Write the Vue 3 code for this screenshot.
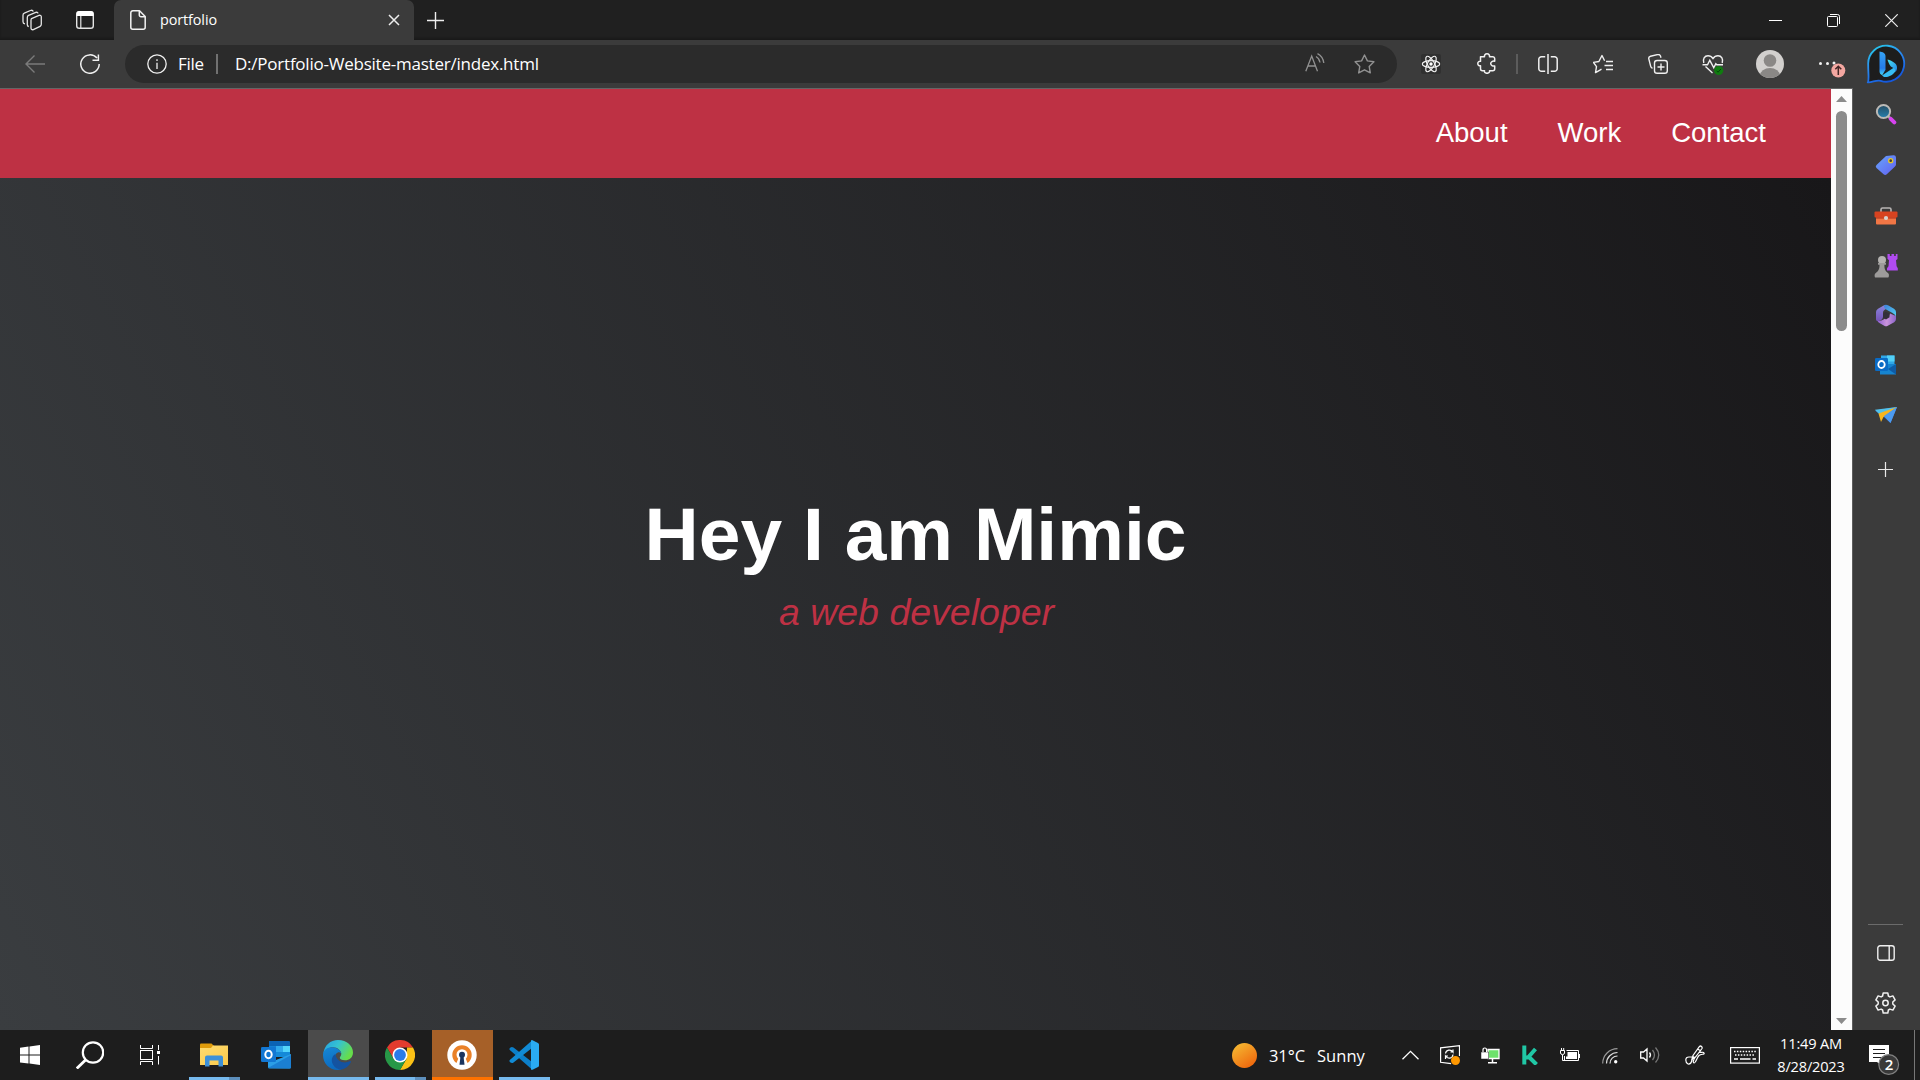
<script setup>
const links = ['About', 'Work', 'Contact']
</script>

<template>
  <div class="screen">
    <header class="titlebar">
      <div class="slot workspaces">
        <svg width="22" height="22" viewBox="0 0 22 22" fill="none" stroke="#e4e4e4" stroke-width="1.3" stroke-linejoin="round">
          <path d="M10.500 9.600l7.500-3.200c1.200-.4 2.300.2 2.300 1.400v7.500c0 1-.4 1.600-1.200 2l-6.800 3.300c-1.200.5-2.300-.2-2.300-1.500v-7.600c0-1 0-1.500.5-1.900z" />
          <path d="M7.800 17.500c-1-.2-1.500-.800-1.500-1.800V8.500c0-1 .5-1.700 1.300-2.100l7.200-3c1.200-.4 2 .1 2.300 1" />
          <path d="M4 14.800c-1.200-.1-2-.8-2-2V6.200c0-1 .5-1.700 1.300-2L9.500 1.500c1.300-.5 2.300-.1 2.800 1" />
        </svg>
      </div>
      <div class="slot tab-actions">
        <svg width="20" height="20" viewBox="0 0 20 20" fill="none">
          <rect x="1.700" y="1.700" width="16.600" height="16.600" rx="2.600" stroke="#e4e4e4" stroke-width="1.400" />
          <path d="M1.500 6V4a3 3 0 0 1 3-3h11a3 3 0 0 1 3 3v2z" fill="#fff" />
          <path d="M5.800 6v12" stroke="#e4e4e4" stroke-width="1.200" />
        </svg>
      </div>
      <div class="tab">
        <svg width="16" height="20" viewBox="0 0 16 20" fill="none" stroke="#f2f2f2" stroke-width="1.500" stroke-linejoin="round">
          <path d="M2.800.8h6.700l5.700 5.700v10.700a2 2 0 0 1-2 2H2.800a2 2 0 0 1-2-2V2.800a2 2 0 0 1 2-2z" />
          <path d="M9.300 1v4a1.700 1.700 0 0 0 1.700 1.700h4" />
        </svg>
        <span class="tab-title">portfolio</span>
        <svg class="tab-close" width="12" height="12" viewBox="0 0 12 12" stroke="#eee" stroke-width="1.500"><path d="M1 1l10 10M11 1L1 11" /></svg>
      </div>
      <svg class="new-tab" width="17" height="17" viewBox="0 0 17 17" stroke="#eee" stroke-width="1.400"><path d="M0 8.500h17M8.500 0v17" /></svg>
      <div class="controls">
        <svg width="13" height="13" viewBox="0 0 13 13" stroke="#fff"><path d="M0 6.500h13" /></svg>
        <svg width="13" height="13" viewBox="0 0 13 13" fill="none" stroke="#fff"><rect x=".5" y="2.500" width="10" height="10" rx="1" /><path d="M3 .5h7.500a2 2 0 0 1 2 2V10" /></svg>
        <svg width="13" height="13" viewBox="0 0 13 13" stroke="#eee" stroke-width="1.200"><path d="M.3.3l12.400 12.400M12.700.3L.3 12.700" /></svg>
      </div>
    </header>

    <div class="middle">
      <div class="browser">
        <div class="toolbar">
          <div class="slot nav-btn">
            <svg width="20" height="18" viewBox="0 0 20 18" fill="none" stroke="#7b7b7b" stroke-width="1.400"><path d="M20 9H1M9.500.6L1 9l8.500 8.400" /></svg>
          </div>
          <div class="slot nav-btn">
            <svg width="20" height="20" viewBox="0 0 20 20" fill="none" stroke="#f0f0f0" stroke-width="1.500"><path d="M19.200 10A9.200 9.200 0 1 1 17 4.100M18.400.5v5.800h-5.900" /></svg>
          </div>
          <div class="address">
            <svg width="20" height="20" viewBox="0 0 20 20" fill="none" stroke="#f0f0f0" stroke-width="1.300"><circle cx="10" cy="10" r="9.200" /><path d="M10 8.700V15M10 5.300V7" /></svg>
            <span class="scheme">File</span>
            <i class="bar"></i>
            <span class="url">D:/Portfolio-Website-master/index.html</span>
            <svg class="aloud" width="20" height="19" viewBox="0 0 20 19" fill="none" stroke="#919191" stroke-width="1.300"><path d="M.8 18.300L6.700 3l5.800 15.300M2.700 13h8M11 3.500c2.200 1.200 3.600 3.400 4 6M12.500.6c3.500 1.800 5.800 5.200 6.300 9.400" /></svg>
            <svg width="21" height="20" viewBox="0 0 21 20" fill="none" stroke="#919191" stroke-width="1.400" stroke-linejoin="round"><path d="M10.500 1l2.900 5.900 6.500.9-4.700 4.600 1.100 6.500-5.800-3.100-5.800 3.100 1.100-6.500L1.100 7.800l6.500-.9z" /></svg>
          </div>
          <div class="tools">
            <div class="slot">
              <svg class="react" width="20" height="20" viewBox="0 0 20 20" fill="none" stroke="#f1f1f1" stroke-width="1.200">
                <ellipse cx="10" cy="10" rx="8.700" ry="3.400" /><ellipse cx="10" cy="10" rx="8.700" ry="3.400" transform="rotate(60 10 10)" /><ellipse cx="10" cy="10" rx="8.700" ry="3.400" transform="rotate(120 10 10)" /><circle cx="10" cy="10" r="1.700" fill="#fff" stroke="none" />
              </svg>
            </div>
            <div class="slot puzzle">
              <svg width="19" height="21" viewBox="0 0 19 21" fill="none" stroke="#f0f0f0" stroke-width="1.500" stroke-linejoin="round"><path d="M3.500 3.700h4c-.3-1.500.6-2.900 2.500-2.900s2.800 1.400 2.500 2.900h3.200a2 2 0 0 1 2 2v2.500c-2-.4-4 .5-4 2.400s2 2.800 4 2.400v2.700a2 2 0 0 1-2 2h-3.200c.3 1.500-.6 2.600-2.500 2.600s-2.800-1.100-2.500-2.600h-2a2 2 0 0 1-2-2v-2.900c-1.500.2-2.700-.5-2.700-2.200s1.200-2.500 2.700-2.300z" /></svg>
            </div>
            <i class="bar tool-bar"></i>
            <div class="slot">
              <svg width="20" height="20" viewBox="0 0 20 20" fill="none" stroke="#f0f0f0" stroke-width="1.500"><path d="M7.200 2.700H3.500A2.600 2.600 0 0 0 .8 5.300v9.400a2.600 2.600 0 0 0 2.700 2.600h3.700M12.800 2.700h3.700a2.600 2.600 0 0 1 2.700 2.600v9.400a2.600 2.600 0 0 1-2.700 2.600h-3.700M10 0v20" /></svg>
            </div>
            <div class="slot">
              <svg width="20" height="20" viewBox="0 0 20 20" fill="none" stroke="#f0f0f0" stroke-width="1.400" stroke-linejoin="round"><path d="M6.500 16.300l-4 2.300 1-6-3-4.200 5.400-.9L9 1.500l2.600 5.300M13 7.500h7M11.500 11.500H20M13 15.500h7M6.500 16.300l2-1.100" /></svg>
            </div>
            <div class="slot">
              <svg width="20" height="20" viewBox="0 0 20 20" fill="none" stroke="#f0f0f0" stroke-width="1.400"><rect x="6.500" y="6.500" width="12.800" height="12.800" rx="2.600" /><path d="M13 9.500v7M9.500 13h7M4.500 14.200c-1-.2-1.600-.9-1.800-1.800L.8 4.800C.5 3.300 1.200 2.500 2.500 2.200l7-1.600c1.500-.3 2.500.2 3 1.500l.5 1.700" /></svg>
            </div>
            <div class="slot">
              <svg class="heart" width="22" height="22" viewBox="0 0 22 22" fill="none" stroke="#f0f0f0" stroke-width="1.400"><path d="M1.800 9C.5 5 2.500 1.700 6 1.700c2 0 3.800 1 5 2.800 1.200-1.800 3-2.800 5-2.800 3.500 0 5.500 3.300 4.200 7.300M3.500 12.500L10.500 19M.5 10.800h5l2.300-4.500 4 7.500 2-4 1 1H21" /><circle cx="16.700" cy="16.500" r="4.600" fill="#107c10" stroke="none" /><path d="M14.500 16.700l1.500 1.500 3-3.300" stroke="#06420a" stroke-width="1" /></svg>
            </div>
            <div class="slot avatar">
              <svg width="28" height="28" viewBox="0 0 28 28"><defs><clipPath id="av"><circle cx="14" cy="14" r="14" /></clipPath></defs><g clip-path="url(#av)"><path fill="#d2d0ce" d="M0 0h28v28H0z" /><circle cx="14" cy="10.500" r="6.300" fill="#8a8886" /><ellipse cx="14" cy="25.500" rx="10" ry="7.500" fill="#8a8886" /></g></svg>
            </div>
            <div class="slot more">
              <svg width="28" height="28" viewBox="0 0 28 28"><g fill="#f2f2f2"><circle cx="2.500" cy="13.500" r="1.500" /><circle cx="9.500" cy="13.500" r="1.500" /><circle cx="16" cy="13" r="1.500" /></g><circle cx="20.300" cy="20.500" r="7" fill="#f4a7a1" /><path d="M20.300 25v-8.500M17.300 19.200l3-3 3 3" fill="none" stroke="#442726" stroke-width="1.500" /></svg>
            </div>
          </div>
        </div>
        <div class="viewport">
          <main class="page">
            <nav><a v-for="l in links" :key="l">{{ l }}</a></nav>
            <section class="welcome">
              <h1>Hey I am Mimic</h1>
              <p>a web developer</p>
            </section>
          </main>
          <div class="scroll">
            <svg width="11" height="6" viewBox="0 0 11 6"><path d="M0 6L5.500 0 11 6z" fill="#8b8b8b" /></svg>
            <div class="thumb"></div>
            <svg class="down" width="11" height="6" viewBox="0 0 11 6"><path d="M0 0l5.500 6L11 0z" fill="#8b8b8b" /></svg>
          </div>
        </div>
      </div>

      <aside>
        <div class="bing">
          <svg width="40" height="40" viewBox="0 0 40 40">
            <defs>
              <linearGradient id="bo" x1="0" y1="0" x2=".5" y2="1"><stop stop-color="#25d3ea" /><stop offset=".5" stop-color="#2b8df0" /><stop offset="1" stop-color="#1558dd" /></linearGradient>
              <linearGradient id="bb" x1="0" y1="0" x2="0" y2="1"><stop stop-color="#35a4f5" /><stop offset=".7" stop-color="#257bea" /><stop offset="1" stop-color="#43d8f6" /></linearGradient>
              <linearGradient id="bc" x1="0" y1="0" x2="1" y2="1"><stop stop-color="#49e2ee" /><stop offset="1" stop-color="#2285e9" /></linearGradient>
            </defs>
            <path d="M2 38.300C3.200 35 2.200 30 2.200 20a18 18 0 1 1 12.500 16.800C10.500 35.500 6 38.700 2 38.300z" fill="#1d1d1d" stroke="url(#bo)" stroke-width="1.800" />
            <path d="M13.500 7.500c3 .5 6 1.500 6 4.500v13.700l-3.300 5.500c-1.700-.8-2.700-2-2.700-4z" fill="url(#bb)" />
            <path d="M16 31.500l12-8c2-1.300 2.500.3 2 2.300-1.200 4.400-7.500 8-12 7.200z" fill="#36bdf1" />
            <path d="M21.500 15.500c5 1.500 10 4 9.500 8.500 0 1.500-.7 3-1.500 4 .4-2.500-1.500-3.800-3.500-4.700-1.700-.8-3.800-4.800-4.500-7.800z" fill="url(#bc)" />
          </svg>
        </div>
        <div class="app search">
          <svg width="22" height="22" viewBox="0 0 22 22"><defs><linearGradient id="lens" x2="0" y2="1"><stop stop-color="#264c62" /><stop offset="1" stop-color="#2680af" /></linearGradient></defs><path d="M13 13l3 3" stroke="#aaa" stroke-width="2.500" /><circle cx="8.500" cy="8.500" r="6.600" fill="url(#lens)" stroke="#bcbab7" stroke-width="2" /><path d="M15.800 15.800l3.500 3.500" stroke="#d743ef" stroke-width="4" stroke-linecap="round" /></svg>
        </div>
        <div class="app">
          <svg width="22" height="22" viewBox="0 0 22 22"><defs><linearGradient id="tg" x1="0" y1="0" x2="1" y2="1"><stop stop-color="#67a6fb" /><stop offset="1" stop-color="#625ff1" /></linearGradient></defs><path d="M11 2L18.500 1.200Q20.800 1 21 3.500v7q0 1-1 2L11.800 20.300q-1.600 1.400-3.200 0L1.500 14q-1.500-1.600 0-3z" fill="url(#tg)" /><circle cx="15.700" cy="6.700" r="2" fill="#403d39" stroke="#e7c828" stroke-width="1.300" /></svg>
        </div>
        <div class="app toolbox">
          <svg width="24" height="20" viewBox="0 0 24 20"><path d="M7 6V3.500Q7 2 8.500 2h7Q17 2 17 3.500V6" fill="none" stroke="#b8b5b4" stroke-width="1.600" /><path d="M2 11h20v6.500q0 1-1 1H3q-1 0-1-1z" fill="#f17645" /><rect x=".5" y="5.500" width="23" height="6" rx="1" fill="#d84320" /><path d="M2 12h20" stroke="#b12d17" /><circle cx="12" cy="12" r="2.100" fill="#d9d4d0" /></svg>
        </div>
        <div class="app">
          <svg width="24" height="25" viewBox="0 0 24 25"><path d="M13.500 1h2.300v2h1.700V1h2.600v2h1.700V1h1.700v5l-1.500 1.300.6 6 1.200 2v2.200H13v-2.200l1.500-2 .5-6-1.500-1.500z" fill="#b04bf0" /><circle cx="8" cy="7" r="4" fill="#b3b1af" /><path d="M4 10h8v1.800h-1.600c0 4 .5 6 3.800 8.400 1.200.9.800 4.300-.2 4.300H1.500c-1 0-1.300-3.400 0-4.300 3.400-2.400 4-4.400 4-8.400H4z" fill="#9d9b9a" /></svg>
        </div>
        <div class="app">
          <svg width="22" height="23" viewBox="0 0 22 23"><defs><linearGradient id="m1" x2="0" y2="1"><stop stop-color="#8a86dd" /><stop offset="1" stop-color="#7553b8" /></linearGradient><linearGradient id="m2" x2="1" y2="1"><stop stop-color="#3f7fd9" /><stop offset="1" stop-color="#52d3f2" /></linearGradient><linearGradient id="m3" x2="1" y2="0"><stop stop-color="#8d5fd0" /><stop offset=".5" stop-color="#cb94dc" /><stop offset="1" stop-color="#8a63c9" /></linearGradient></defs>
            <path d="M9.500 1L3 4.700Q1 6 1 8v7.500q0 1.500 2 1.500 4.500-.5 5-4V8.500Q8 6 12.500 4.500z" fill="url(#m1)" /><path d="M9.500 1q1.700-.8 3.500.2L19 4.700q2 1.200 2 3.300v5q-.5-2.500-3.500-4L12 6Q9 4.500 9 2.500z" fill="url(#m2)" /><path d="M21 12v3q0 2-1.800 3.200l-6.400 3.600q-1.800 1-3.600 0L4 18.700q-1.500-1-1.500-2.200 3 .8 6-1L14 12l1-2.500z" fill="url(#m3)" /><path d="M10.500 7.800l4 1.700v3.800l-3.500 2.200-3-2v-3.700z" fill="#33303a" /></svg>
        </div>
        <div class="app">
          <svg width="22" height="22" viewBox="0 0 22 22"><path d="M6 1.500h13.500v10H6z" fill="#30a8e8" /><path d="M12 1.500h7.500v6H12z" fill="#52d0f7" /><path d="M5 10h16v10.500H5z" fill="#1684d0" /><path d="M21 10v10.500L13 15z" fill="#0f5ba5" /><rect y="4" width="13" height="13" rx="1.300" fill="#0a6bc5" /><ellipse cx="6.500" cy="10.500" rx="3.200" ry="3.500" fill="none" stroke="#fff" stroke-width="1.800" /></svg>
        </div>
        <div class="app">
          <svg width="22" height="18" viewBox="0 0 22 18"><path d="M0 4.500L22 1 15.500 17 9 11z" fill="#397ee9" /><path d="M0 3.800L22 1 5 9z" fill="#51c1ea" /><path d="M3.500 7.500L22 1 8.500 11 6 16z" fill="#f7b51f" /><path d="M22 1L9 10l6.500 7z" fill="#4c9bf0" /></svg>
        </div>
        <div class="app add"><svg width="15" height="15" viewBox="0 0 15 15" stroke="#e8e8e8" stroke-width="1.200"><path d="M0 7.500h15M7.500 0v15" /></svg></div>
        <div class="side-end">
          <svg width="18" height="16" viewBox="0 0 18 16" fill="none" stroke="#f0f0f0" stroke-width="1.400"><rect x=".8" y=".8" width="16.400" height="14.400" rx="2.300" /><path d="M12.200 1v14" /></svg>
        </div>
        <div class="app">
          <svg width="21" height="22" viewBox="0 0 21 22" fill="none" stroke="#f0f0f0" stroke-width="1.500" stroke-linejoin="round"><circle cx="10.500" cy="11" r="2.700" /><path d="M8.200 1h4.600l.6 3 1.500.9 3-1 2.200 4-2.300 2.100v2l2.300 2.100-2.200 4-3-1-1.500.9-.6 3H8.200l-.6-3-1.500-.9-3 1-2.200-4L3.200 12v-2L.9 7.900l2.200-4 3 1L7.600 4z" /></svg>
        </div>
      </aside>
    </div>

    <footer>
      <div class="system">
        <div><svg width="20" height="20" viewBox="0 0 20 20" fill="#fff"><path d="M0 2.700L8.500 1.500v8H0zM9.500 1.400L20 0v9.500H9.500zM0 10.500h8.500v8L0 17.400zM9.500 10.500H20V20L9.500 18.600z" /></svg></div>
        <div><svg width="28" height="28" viewBox="0 0 28 28" fill="none" stroke="#fff" stroke-width="2.200"><circle cx="17" cy="11.500" r="10.200" /><path d="M9.800 18.700L.8 27.500" stroke-width="2.800" /></svg></div>
        <div><svg width="20" height="20" viewBox="0 0 20 20" fill="none" stroke="#fff"><path d="M.5 0v3.500h12V0M.5 20v-3.500h12V20" /><rect x=".5" y="5.500" width="12" height="9" /><path d="M18.500 0v5M18.500 11v8.500" /><path d="M17 6h3v3h-3z" fill="#fff" stroke="none" /></svg></div>
      </div>
      <div class="apps">
        <div class="task multi">
          <svg width="28" height="24" viewBox="0 0 28 24"><defs><linearGradient id="fg" x2="1" y2="1"><stop stop-color="#ffdc70" /><stop offset="1" stop-color="#f9c94b" /></linearGradient></defs><path d="M0 1.500Q0 .5 1 .5h10.500L14 3l-2 3H0z" fill="#e09c0b" /><path d="M0 5h11l2-2.500h15V22H0z" fill="url(#fg)" /><path d="M5 23.500v-9q0-2 2-2h14q2 0 2 2v9h-4.500v-6h-9v6z" fill="#3c90d8" /></svg>
        </div>
        <div class="task idle">
          <svg width="30" height="28" viewBox="0 0 30 28"><path d="M8 0h20q1 0 1 1v14H8z" fill="#0b63b5" /><path d="M8 5h7v13H8z" fill="#1482d4" /><path d="M15 5h7v6h-7z" fill="#31a9ec" /><path d="M22 5h7v6h-7z" fill="#53d5fb" /><path d="M15 11h14v5H15z" fill="#1489d8" /><path d="M7 17l8 2 15-6v13q0 1.500-1.500 1.500h-20Q7 27.500 7 26z" fill="#2b9ee6" /><path d="M7 27l23-13v12q0 1.500-1.500 1.500z" fill="#1b7fd2" /><rect y="6" width="15" height="15" rx="1.300" fill="#1277d3" /><ellipse cx="7.500" cy="13.500" rx="3.200" ry="3.700" fill="none" stroke="#fff" stroke-width="2" /></svg>
        </div>
        <div class="task active">
          <svg width="30" height="30" viewBox="0 0 30 30">
            <defs>
              <linearGradient id="e1" x1="0" y1="0" x2="1" y2=".45"><stop stop-color="#229fe5" /><stop offset=".5" stop-color="#36c3d0" /><stop offset="1" stop-color="#66dd4b" /></linearGradient>
              <linearGradient id="e2" x1=".2" y1="0" x2=".5" y2="1"><stop stop-color="#1586d5" /><stop offset="1" stop-color="#0b68bd" /></linearGradient>
            </defs>
            <path d="M.4 13.500C1.300 5.300 7.500 0 15 0c9 0 15 6 15 12.500 0 5-3.800 7.800-8 7.800-3.300 0-5.200-1.200-5.200-2.500 0-.9 1.500-1.500 1.500-4 0-3-3.500-6.500-8.500-6.500-4.300 0-7.600 2.300-9.400 6.200z" fill="url(#e1)" />
            <path d="M0 15C0 10 4.500 7.300 9 7.300c5 0 9 3.200 9.300 6.400-1-1.200-2.300-1.600-3.500-1.300-2 .5-2.600 3-2.600 5 0 6 5.500 9.500 11 8.400C20.500 28.500 18 30 14.500 30 6 30 0 23 0 15z" fill="url(#e2)" />
            <path d="M12.500 14C9 16 8 20 9.500 23.500c1.500 3.800 5 6 8.500 6 4.200-.5 8-3.300 9.800-7.200.4-.9-.3-1.500-1.200-1-5.300 3-13.600 0-14.100-7.300z" fill="#1453a0" />
          </svg>
        </div>
        <div class="task multi">
          <svg width="30" height="30" viewBox="0 0 30 30"><path d="M2 7.500A15 15 0 0 1 28 7.500H15L8.500 18.800z" fill="#e33b2e" /><path d="M28 7.500A15 15 0 0 1 15 30l6.500-11.200L22 7.500z" fill="#fbc116" /><path d="M2 7.500A15 15 0 0 0 15 30l6.500-11.200-13 0z" fill="#279847" /><circle cx="15" cy="15" r="7.500" fill="#fff" /><circle cx="15" cy="15" r="5.900" fill="#2a7bea" /></svg>
        </div>
        <div class="task vpn">
          <svg width="30" height="30" viewBox="0 0 30 30"><circle cx="15" cy="15" r="14.700" fill="#fff" /><path d="M9.500 23a9.700 9.700 0 1 1 11 0l-1.700-4.300a5.500 5.500 0 1 0-7.600 0z" fill="#ea8128" /><circle cx="15" cy="14.700" r="3" fill="#1b345e" /><path d="M13.500 16h3l1 8.800h-5z" fill="#1b345e" /></svg>
        </div>
        <div class="task code">
          <svg width="30" height="30" viewBox="0 0 30 30"><path d="M1.500 7.500Q3 6.500 4.500 7.600L23 22v7.500L.8 10q-1-1.500.7-2.500z" fill="#0c7fc9" /><path d="M1.500 22.500q1.500 1 3-.1L23 8V.5L.8 20q-1 1.500.7 2.500z" fill="#118bd5" /><path d="M22 .5q1-.8 2 0L29 3q1 .5 1 1.500v21q0 1-1 1.500l-5 2.500q-1 .7-2 0z" fill="#2aabf2" /></svg>
        </div>
      </div>
      <div class="weather">
        <svg width="25" height="25" viewBox="0 0 25 25"><defs><linearGradient id="sun" x1=".1" y1="0" x2=".8" y2="1"><stop stop-color="#f5bd34" /><stop offset="1" stop-color="#ef630b" /></linearGradient></defs><circle cx="12.500" cy="12.500" r="12.500" fill="url(#sun)" /></svg>
        <span class="deg">31°C</span><span class="sky">Sunny</span>
      </div>
      <div class="tray">
        <div><svg width="17" height="10" viewBox="0 0 17 10" fill="none" stroke="#fff" stroke-width="1.300"><path d="M.5 9.300l8-8 8 8" /></svg></div>
        <div><svg width="20" height="20" viewBox="0 0 20 20" fill="none" stroke="#fff" stroke-width="1.200"><path d="M19.500 11V.7L.6 2.800v14.500l10.500 1.400" /><path d="M5.500 8.500c.5-4 5.500-4.500 7.500-1.500V4.500M13 7h-2.500M13 9.500c-.5 4-5 5-7.500 1.500v3M5.500 11H8" /><circle cx="15.500" cy="15.500" r="4.500" fill="#ff9800" stroke="none" /></svg></div>
        <div><svg width="19" height="18" viewBox="0 0 19 18" fill="none"><path d="M7 3.500h11v9H7z" fill="#6de26b" stroke="#fff" stroke-width="1.300" /><path d="M11.500 13v3.500M7 16.800h9" stroke="#fff" stroke-width="1.500" /><path d="M0 6h7.500v7H0z" fill="#fff" stroke="#1d1d1d" stroke-width=".5" /><path d="M2 6V4q0-2 1.800-2t1.800 2v2" stroke="#fff" stroke-width="1.200" /></svg></div>
        <div><svg width="17" height="20" viewBox="0 0 17 20" fill="none" stroke="#20c7a5" stroke-width="4"><path d="M2.300.5v19M3 12.500h3L13.500 4M6.500 11.500l8 8" /></svg></div>
        <div><svg width="20" height="14" viewBox="0 0 20 14" fill="none" stroke="#fff"><path d="M6.500 2.500h12v10h-14V8" /><path d="M7.500 4h9.500v7H6V8.500h1.500z" fill="#fff" stroke="none" /><path d="M19.500 6v4" /><path d="M.5 2.500h4V5Q4.500 6.500 2.500 6.500T.5 5zM1.500 0v2.500M3.700 0v2.500M2.500 7v5.500H5" /></svg></div>
        <div><svg class="wifi" width="16" height="16" viewBox="0 0 16 16" fill="none" stroke="#ddd" stroke-width="1.200"><path d="M.7 15.500A14.800 14.800 0 0 1 15.500.7" stroke="#999" /><path d="M4.500 15.500a11 11 0 0 1 11-11M8 15.500A7.500 7.500 0 0 1 15.500 8" /><circle cx="13.700" cy="13.700" r="1.700" fill="#fff" stroke="none" /></svg></div>
        <div><svg width="20" height="18" viewBox="0 0 20 18" fill="none" stroke="#fff" stroke-width="1.300"><path d="M.7 6h2.800l3.500-3v12l-3.500-3H.7zM9.500 6.500q2 2.500 0 5" /><path d="M12.500 4q4 5 0 10M15.500 1.500q6.500 7.500 0 15" stroke="#777" /></svg></div>
        <div class="wide"><svg width="20" height="20" viewBox="0 0 20 20" fill="none" stroke="#fff" stroke-width="1.200"><path d="M7 14l1-3.500 6.500-9q1-1 2 0t.5 2L10.500 12zM12.500 4l3.500 2M7.500 12H4q-3.200 0-3.200 3T3 19q3 .5 4-4l2-3.500M10.500 12c-2 2.500-3 5.500-1.500 6s3-5.500 5-7.500 6-.5 5-2.500-2.500.5-5-1" /></svg></div>
        <div class="wide"><svg width="30" height="18" viewBox="0 0 30 18" fill="none" stroke="#fff"><rect x=".6" y="1.600" width="28.800" height="15.500" stroke-width="1.200" /><path d="M4 5.500h22" stroke-width="1.300" stroke-dasharray="1.500 1.400" /><path d="M5 9h20" stroke-width="1.300" stroke-dasharray="1.500 1.400" /><path d="M4 13h4M10 13h10.500M22.500 13h3.500" stroke-width="1.300" /></svg></div>
      </div>
      <div class="clock"><span>11:49 AM</span><span>8/28/2023</span></div>
      <div class="action">
        <svg width="31" height="32" viewBox="0 0 31 32"><path d="M0 1h20v17h-7v4l-5-4H0z" fill="#fff" /><path d="M4 5.500h12M4 9.500h12M4 13.500h12" stroke="#1d1d1d" stroke-width="1.200" /><circle cx="19.700" cy="20.500" r="9.900" fill="#393939" stroke="#818181" stroke-width="1.200" /></svg>
        <b>2</b>
      </div>
      <i class="peek"></i>
    </footer>
  </div>
</template>

<style>
body { overflow: hidden; background: #1d1d1d; }
</style>

<style scoped>
* { box-sizing: border-box; }
svg { display: block; flex: none; }
.screen { width: 1920px; height: 1080px; display: flex; flex-direction: column; overflow: hidden; font-family: "Open Sans", "Noto Sans", sans-serif; color: #fff; }
.slot { display: flex; align-items: center; justify-content: center; flex: none; }
.titlebar { height: 40px; background: #202020; display: flex; align-items: center; box-shadow: inset 0 -2px 2px #1a1a1a; flex: none; }
.workspaces { width: 64px; }
.tab-actions { width: 42px; }
.tab { margin-left: 8px; width: 300px; height: 40px; padding: 0 14px 0 16px; background: #3b3b3b; border-radius: 7px 7px 0 0; display: flex; align-items: center; }
.tab-title { font-size: 14.400px; margin-left: 14px; letter-spacing: -.1px; line-height: 20px; }
.tab-close { margin-left: auto; }
.new-tab { margin-left: 13px; }
.controls { margin-left: auto; display: flex; gap: 45px; padding-right: 22px; }

.middle { height: 990px; display: flex; }
.browser { width: 1853px; display: flex; flex-direction: column; background: #3b3b3b; }
.toolbar { height: 48px; display: flex; align-items: center; padding-left: 7px; flex: none; }
.nav-btn { width: 55px; }
.address { width: 1272px; height: 38px; margin-left: 8px; border-radius: 19px; background: #2b2b2b; display: flex; align-items: center; padding: 0 22px 0 22px; font-size: 17px; line-height: 24px; flex: none; }
.scheme { margin-left: 11px; width: 38px; letter-spacing: -.3px; }
.bar { width: 2px; height: 20px; background: #717171; display: block; }
.url { margin-left: 17px; letter-spacing: -.23px; white-space: nowrap; }
.aloud { margin-left: auto; margin-right: 29px; margin-top: -4px; }
.tools { display: flex; align-items: center; margin-left: 6px; margin-top: -1px; }
.tools .slot { width: 55px; }
.tools .puzzle { width: 56px; }
.tool-bar { margin: 0 2px; background: #5c5c5c; }
.react { background: #303030; border-radius: 2px; }
.tools .avatar { width: 59px; }
.tools .more { width: 56px; padding-left: 9px; margin-top: 1px; }
.heart { margin-top: 2px; }

.viewport { flex: 1; display: flex; border-top: 1px solid #656565; border-right: 1px solid #5d5d5d; }
.page { width: 1831px; display: flex; flex-direction: column; font-family: "Liberation Sans", Arial, sans-serif; }
nav { height: 89px; flex: none; background: #be3144; display: flex; justify-content: flex-end; align-items: center; gap: 50px; padding: 0 65px 2px 0; font-size: 27.500px; }
.welcome { flex: 1; display: flex; flex-direction: column; align-items: center; justify-content: center; gap: 14px; padding-bottom: 83px; background: linear-gradient(62.500deg, #3a3d40 0%, #181719 100%); }
h1 { margin: 0; font-size: 75px; line-height: 86px; font-weight: 700; }
.welcome p { margin: 0; padding-left: 2px; font-size: 37.500px; line-height: 43px; font-style: italic; font-weight: 200; color: #be3144; }
.scroll { width: 21px; background: #fcfcfc; display: flex; flex-direction: column; align-items: center; padding: 7px 0 6px; }
.thumb { width: 11px; height: 220px; margin-top: 9px; border-radius: 6px; background: #8b8b8b; }
.down { margin-top: auto; }

aside { width: 67px; padding-right: 2px; background: #3b3b3b; display: flex; flex-direction: column; align-items: center; }
.bing { height: 50px; padding: 4px 0 0 1px; }
.app { height: 50px; display: flex; align-items: center; flex: none; }
.search { padding-bottom: 2px; }
.toolbox { padding-top: 1px; }
.add { height: 59px; }
.side-end { margin-top: auto; width: 35px; height: 54px; border-top: 1px solid #6b6b6b; display: flex; justify-content: center; padding-top: 20px; }
aside .app:last-child { margin-bottom: 2px; }

footer { height: 50px; background: #1d1d1d; display: flex; align-items: stretch; flex: none; }
.system, .tray, .apps { display: flex; }
.system div { width: 60px; display: flex; align-items: center; justify-content: center; }
.apps { margin-left: 4px; gap: 1px; width: 371px; }
.task { width: 61px; flex: none; display: flex; align-items: center; justify-content: center; padding-right: 1px; background: linear-gradient(#76b9ed, #76b9ed) 50% 100% / 51px 3px no-repeat; }
.task.multi { background: linear-gradient(90deg, #76b9ed 40px, #5d8fbc 40px) 50% 100% / 51px 3px no-repeat; }
.task.idle { background: none; }
.task.active { background: linear-gradient(#76b9ed, #76b9ed) 50% 100% / 61px 3px no-repeat #4b4b4b; }
.task.vpn { background: linear-gradient(#ff7200, #ff7200) 50% 100% / 61px 3px no-repeat #a66028; }
.weather { margin-left: 676px; width: 159px; padding-left: 1px; display: flex; align-items: center; font-size: 16.500px; white-space: nowrap; flex: none; }
.deg { margin-left: 12px; letter-spacing: -.1px; width: 48px; }
.sky { letter-spacing: .05px; }
.tray div { width: 40px; display: flex; align-items: center; justify-content: center; }
.tray .wide { width: 50px; }
.wifi { margin-top: 2px; }
.clock { width: 82px; display: flex; flex-direction: column; align-items: center; padding-top: 2px; font-size: 14.600px; line-height: 23px; letter-spacing: -.2px; flex: none; }
.action { width: 62px; padding: 14px 0 0 17px; position: relative; flex: none; }
.action b { position: absolute; left: 27px; top: 24px; width: 20px; text-align: center; font-size: 15px; line-height: 21px; font-weight: 600; }
.peek { width: 1px; background: #777; }
</style>
